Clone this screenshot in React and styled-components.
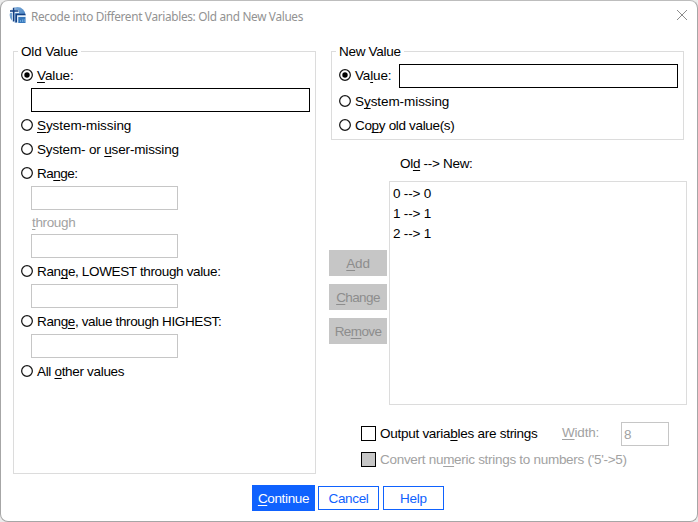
import React from "react";
import styled, { createGlobalStyle } from "styled-components";

const GlobalStyle = createGlobalStyle`
  * { box-sizing: border-box; }
  html, body { margin: 0; padding: 0; background: #ececec; overflow: hidden; }
  body { font: 13.5px/16px "Liberation Sans", Arial, sans-serif; color: #000; }
  u { text-decoration: underline; text-decoration-skip-ink: none; text-underline-offset: 2px; text-decoration-thickness: 1px; }
`;

const Dialog = styled.main`
  width: 698px;
  height: 522px;
  display: flex;
  flex-direction: column;
  background: #fff;
  border: 1px solid #a6a6a6;
  border-top-color: #bdbdbd;
  border-radius: 8px;
`;

const TitleBar = styled.header`
  height: 42px;
  padding: 5px 9px 0 8px;
  display: flex;
  align-items: flex-start;
`;

const Title = styled.h1`
  flex: 1;
  margin: 1px 0 0 5px;
  font: 400 11.8px/18px "Noto Sans", "Open Sans", sans-serif;
  letter-spacing: -0.32px;
  color: #929292;
`;

const CloseButton = styled.button`
  width: 12px;
  height: 12px;
  margin-top: 3px;
  padding: 0;
  border: 0;
  background: none;
  display: flex;
`;

const Columns = styled.div`
  display: grid;
  grid-template-columns: 303px 1fr;
  column-gap: 13px;
  height: 431px;
  padding-left: 12px;
`;

const RightColumn = styled.div`
  display: flex;
  flex-direction: column;
`;

const Group = styled.fieldset`
  min-width: 0;
  width: ${(p) => p.$width}px;
  height: ${(p) => p.$height}px;
  margin: 0 0 0 ${(p) => p.$indent || 0}px;
  padding: 0 0 0 7px;
  border: 1px solid #dcdcdc;
`;

const Legend = styled.legend`
  height: 16px;
  margin-left: -3px;
  padding: 0 3px;
  line-height: 17px;
`;

const Text = styled.span`
  white-space: pre;
  letter-spacing: ${(p) => p.$spacing || 0}px;
`;

const Option = styled.label`
  display: flex;
  align-items: center;
  height: 24px;
  margin-top: ${(p) => p.$gap || 0}px;
  gap: 4px;
  ${Text} { padding-top: 1px; }
`;

const Field = styled.input`
  display: block;
  width: ${(p) => p.$width || 147}px;
  height: 24px;
  margin: ${(p) => p.$margin || "1px 0 1px 10px"};
  padding: 0 2px;
  border: 1px solid ${(p) => (p.disabled ? "#c6c6c6" : "#000")};
  border-radius: 0;
  outline: 0;
  background: #fff;
  color: #a2a2a2;
  font: inherit;
`;

const Through = styled.div`
  height: 22px;
  margin-left: 11px;
  line-height: 23px;
  color: #a2a2a2;
`;

const MappingArea = styled.section`
  display: grid;
  grid-template-columns: 58px 298px;
  grid-template-rows: 41px 224px;
  column-gap: 2px;
`;

const MappingTitle = styled.div`
  grid-column: 2;
  padding: 16px 0 0 11px;
`;

const MappingButtons = styled.div`
  display: flex;
  flex-direction: column;
  gap: 8px;
  padding-top: 69px;
`;

const DisabledButton = styled.button`
  height: 26px;
  padding: 1px 0 0;
  border: 0;
  background: #c6c6c6;
  color: #8d8d8d;
  font: inherit;
`;

const MappingList = styled.ul`
  margin: 0;
  padding: 2px 3px;
  border: 1px solid #dcdcdc;
  list-style: none;
  line-height: 20px;
`;

const OutputRow = styled.div`
  display: flex;
  align-items: center;
  height: 24px;
  margin: ${(p) => p.$top}px 0 0 32px;
`;

const CheckMark = styled.span`
  width: 15px;
  height: 15px;
  margin: 0 4px 1px 0;
  border: 1px solid #000;
  background: ${(p) => (p.$disabled ? "#c6c6c6" : "#fff")};
`;

const OutputLabel = styled.label`
  display: flex;
  align-items: center;
  color: ${(p) => (p.$disabled ? "#a2a2a2" : "#000")};
  width: ${(p) => p.$width || "auto"};
`;

const WidthLabel = styled.span`
  width: 59px;
  margin-top: -2px;
  color: #a2a2a2;
`;

const Footer = styled.footer`
  display: flex;
  align-items: center;
  height: 26px;
  margin-top: 11px;
  padding-left: 251px;
`;

const ActionButton = styled.button`
  width: ${(p) => (p.$primary ? 63 : 61)}px;
  height: ${(p) => (p.$primary ? 26 : 24)}px;
  margin-right: ${(p) => (p.$primary ? 3 : 4)}px;
  padding: 1px 0 0;
  border: 1px solid #0f62fe;
  background: ${(p) => (p.$primary ? "#0f62fe" : "#fff")};
  color: ${(p) => (p.$primary ? "#fff" : "#0f62fe")};
  font: inherit;
`;

function AppIcon() {
  return (
    <svg width="17" height="18" viewBox="0 0 17 18">
      <defs>
        <linearGradient id="sky" x1="0" y1="0" x2="1" y2="1">
          <stop offset="0" stopColor="#8fb9e2" />
          <stop offset="1" stopColor="#2f6fb5" />
        </linearGradient>
      </defs>
      <circle cx="8.5" cy="9" r="7.9" fill="url(#sky)" />
      <path d="M4.6 2V16M1 5.5h9" stroke="#e8f2fb" strokeWidth="3" fill="none" />
      <path d="M4.7 1.8V15.5M1 5h8.5" stroke="#123f83" strokeWidth="1.6" fill="none" />
      <path d="M7 17V8h9.5v9z" fill="#e4f0fa" />
      <path d="M7.3 16.5V8.5H16.5" stroke="#123f83" strokeWidth="1.5" fill="none" />
      <path d="M9.3 11H16.5V17H9.3z" fill="#3777bb" />
      <path d="M11.5 14v2M13.5 13.5V16M15.2 13v3" stroke="#78b3e3" strokeWidth="0.8" />
    </svg>
  );
}

function RadioMark({ checked }) {
  return (
    <svg width="12" height="12" viewBox="0 0 12 12">
      <circle cx="6" cy="6" r="5.35" fill="#fff" stroke="#161616" strokeWidth="1.25" />
      {checked && <circle cx="6" cy="6" r="2.7" fill="#000" />}
    </svg>
  );
}

function Radio({ checked, gap, spacing, children }) {
  return (
    <Option $gap={gap}>
      <RadioMark checked={checked} />
      <Text $spacing={spacing}>{children}</Text>
    </Option>
  );
}

export default function App() {
  return (
    <>
      <GlobalStyle />
      <Dialog>
        <TitleBar>
          <AppIcon />
          <Title>Recode into Different Variables: Old and New Values</Title>
          <CloseButton aria-label="Close">
            <svg width="12" height="12" viewBox="0 0 12 12" stroke="#8c8c8c" strokeWidth="1">
              <path d="M1 1l10 10M11 1L1 11" />
            </svg>
          </CloseButton>
        </TitleBar>
        <Columns>
          <Group $width={303} $height={431}>
            <Legend><Text $spacing={-0.15}>Old Value</Text></Legend>
            <Radio checked gap={4} spacing={-0.1}><u>V</u>alue:</Radio>
            <Field $width={279} />
            <Radio spacing={-0.07}><u>S</u>ystem-missing</Radio>
            <Radio spacing={-0.16}>System- or <u>u</u>ser-missing</Radio>
            <Radio spacing={-0.5}>Ra<u>n</u>ge:</Radio>
            <Field disabled />
            <Through><Text $spacing={-0.35}><u>t</u>hrough</Text></Through>
            <Field disabled />
            <Radio spacing={-0.35}>Ran<u>g</u>e, LOWEST through value:</Radio>
            <Field disabled />
            <Radio spacing={-0.37}>Rang<u>e</u>, value through HIGHEST:</Radio>
            <Field disabled />
            <Radio spacing={-0.32}>All <u>o</u>ther values</Radio>
          </Group>
          <RightColumn>
            <Group $width={353} $height={97} $indent={2}>
              <Legend><Text $spacing={-0.3}>New Value</Text></Legend>
              <Option $gap={4}>
                <RadioMark checked />
                <Text $spacing={-0.15}>Va<u>l</u>ue:</Text>
                <Field $width={279} $margin="2px 5px 0 auto" />
              </Option>
              <Radio gap={2} spacing={-0.07}>S<u>y</u>stem-missing</Radio>
              <Radio spacing={-0.33}>Co<u>p</u>y old value(s)</Radio>
            </Group>
            <MappingArea>
              <MappingTitle><Text $spacing={-0.3}>Ol<u>d</u> --&gt; New:</Text></MappingTitle>
              <MappingButtons>
                <DisabledButton disabled><Text $spacing={-0.2}><u>A</u>dd</Text></DisabledButton>
                <DisabledButton disabled><Text $spacing={-0.6}><u>C</u>hange</Text></DisabledButton>
                <DisabledButton disabled><Text $spacing={-0.6}>Re<u>m</u>ove</Text></DisabledButton>
              </MappingButtons>
              <MappingList>
                <li><Text $spacing={-0.2}>0 --&gt; 0</Text></li>
                <li><Text $spacing={-0.2}>1 --&gt; 1</Text></li>
                <li><Text $spacing={-0.2}>2 --&gt; 1</Text></li>
              </MappingList>
            </MappingArea>
            <OutputRow $top={17}>
              <OutputLabel $width="201px">
                <CheckMark />
                <Text $spacing={-0.27}>Output varia<u>b</u>les are strings</Text>
              </OutputLabel>
              <WidthLabel><Text $spacing={-0.2}><u>W</u>idth:</Text></WidthLabel>
              <Field disabled $width={48} $margin="0" defaultValue="8" />
            </OutputRow>
            <OutputRow $top={2}>
              <OutputLabel $disabled>
                <CheckMark $disabled />
                <Text $spacing={-0.29}>Convert nu<u>m</u>eric strings to numbers ('5'-&gt;5)</Text>
              </OutputLabel>
            </OutputRow>
          </RightColumn>
        </Columns>
        <Footer>
          <ActionButton $primary><Text $spacing={-0.35}><u>C</u>ontinue</Text></ActionButton>
          <ActionButton><Text $spacing={-0.33}>Cancel</Text></ActionButton>
          <ActionButton><Text $spacing={-0.25}>Help</Text></ActionButton>
        </Footer>
      </Dialog>
    </>
  );
}
